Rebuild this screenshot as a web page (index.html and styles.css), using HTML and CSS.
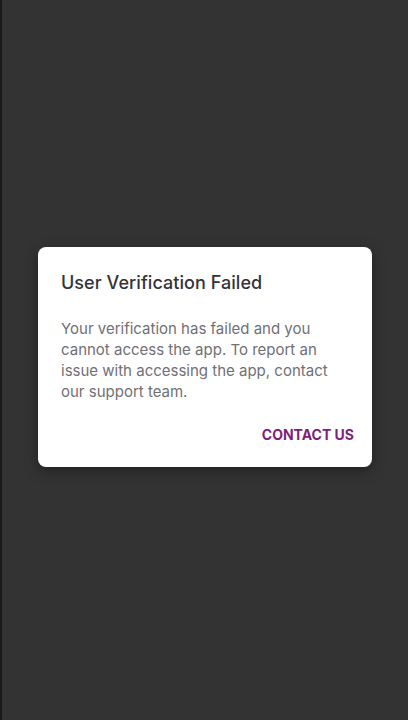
FILE: index.html
```html
<!DOCTYPE html>
<html lang="en">
<head>
<meta charset="utf-8">
<link rel="stylesheet" href="styles.css">
</head>
<body>
<div class="screen">
  <div class="dialog">
    <h1 class="title">User Verification Failed</h1>
    <p class="message">Your verification has failed and you cannot access the app. To report an issue with accessing the app, contact our support team.</p>
    <div class="actions">
      <button class="action">CONTACT US</button>
    </div>
  </div>
</div>
</body>
</html>
```
FILE: styles.css
```css
html, body {
  margin: 0;
  padding: 0;
  height: 100%;
}
body {
  background: #333333;
  font-family: Inter, "Noto Sans", sans-serif;
}
.screen {
  height: 720px;
  border-left: 2px solid #1a1a1a;
  box-sizing: border-box;
  padding-top: 247px;
  padding-left: 36px;
}
.dialog {
  width: 334px;
  height: 220px;
  box-sizing: border-box;
  background: #ffffff;
  border-radius: 8px;
  box-shadow: 0 4px 14px rgba(0,0,0,0.35);
  padding: 24px 18px 0 23px;
}
.title {
  margin: 0;
  font-size: 18px;
  font-weight: 500;
  line-height: 24px;
  color: #333338;
  letter-spacing: 0.05px;
}
.message {
  margin: 23px 0 0;
  font-size: 15px;
  line-height: 21px;
  color: #707075;
  padding-right: 4px;
}
.actions {
  display: flex;
  justify-content: flex-end;
  margin-top: 24px;
}
.action {
  border: none;
  background: none;
  padding: 0;
  font-family: inherit;
  font-size: 14px;
  font-weight: 700;
  color: #7d1f78;
  letter-spacing: 0;
}
```
